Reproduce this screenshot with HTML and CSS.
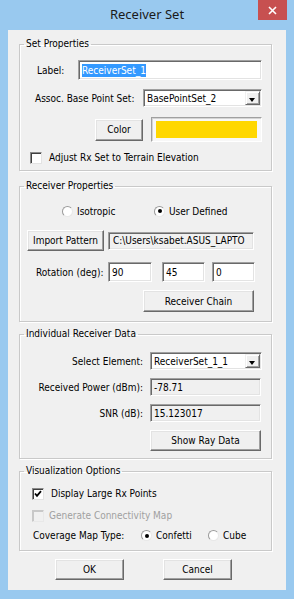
FILE: index.html
```html
<!DOCTYPE html>
<html lang="en">
<head>
  <meta charset="UTF-8" />
  <title>Receiver Set</title>
  <link rel="stylesheet" href="styles.css">
</head>
<body>
  <div class="titlebar">
    <span></span>
    <span class="title">Receiver Set</span>
    <span class="close">
      <svg width="9" height="9" viewBox="0 0 9 9"><path d="M1 1 L8 8 M8 1 L1 8" stroke="#fff" stroke-width="1.6" /></svg>
    </span>
  </div>

  <div class="client">
    <!-- Set Properties -->
    <fieldset class="group g-set">
      <legend>Set Properties</legend>
      <div class="row r-label">
        <span class="lbl w-label">Label:</span>
        <div class="edit w-184"><span class="hilite">ReceiverSet_1</span></div>
      </div>
      <div class="row r-base">
        <span class="lbl w-base">Assoc. Base Point Set:</span>
        <div class="edit combo w-119">BasePointSet_2<span class="drop"></span></div>
      </div>
      <div class="row r-color">
        <div class="btn w-48">Color</div>
        <div class="swatch"><div class="swatch-fill"></div></div>
      </div>
      <div class="row r-adjust">
        <span class="check"></span>
        <span class="opt-text">Adjust Rx Set to Terrain Elevation</span>
      </div>
    </fieldset>

    <!-- Receiver Properties -->
    <fieldset class="group g-rx">
      <legend>Receiver Properties</legend>
      <div class="row r-radios">
        <span class="option w-92"><span class="radio"></span>Isotropic</span>
        <span class="option"><span class="radio on"></span>User Defined</span>
      </div>
      <div class="row r-import">
        <div class="btn w-77">Import Pattern</div>
        <div class="edit ro w-146 clip">C:\Users\ksabet.ASUS_LAPTO</div>
      </div>
      <div class="row r-rot">
        <span class="lbl w-rot">Rotation (deg):</span>
        <div class="edit w-44 tall">90</div>
        <div class="edit w-43 tall m-10">45</div>
        <div class="edit w-43 tall m-7">0</div>
      </div>
      <div class="row r-chain">
        <div class="btn w-111 tall">Receiver Chain</div>
      </div>
    </fieldset>

    <!-- Individual Receiver Data -->
    <fieldset class="group g-data">
      <legend>Individual Receiver Data</legend>
      <div class="data-grid">
        <span class="lbl right">Select Element:</span>
        <div class="edit combo w-112">ReceiverSet_1_1<span class="drop"></span></div>
        <span class="lbl right">Received Power (dBm):</span>
        <div class="edit ro w-111">-78.71</div>
        <span class="lbl right">SNR (dB):</span>
        <div class="edit ro w-111">15.123017</div>
        <span></span>
        <div class="btn w-111">Show Ray Data</div>
      </div>
    </fieldset>

    <!-- Visualization Options -->
    <fieldset class="group g-vis">
      <legend>Visualization Options</legend>
      <div class="row r-large">
        <span class="check">
          <svg width="8" height="8" viewBox="0 0 8 8"><path d="M1 3.5 L3 5.8 L7 1.2" fill="none" stroke="#000" stroke-width="1.8" /></svg>
        </span>
        <span class="opt-text">Display Large Rx Points</span>
      </div>
      <div class="row r-conn disabled">
        <span class="check off"></span>
        <span class="opt-text">Generate Connectivity Map</span>
      </div>
      <div class="row r-cov">
        <span class="lbl w-cov">Coverage Map Type:</span>
        <span class="option w-67"><span class="radio on"></span>Confetti</span>
        <span class="option"><span class="radio"></span>Cube</span>
      </div>
    </fieldset>

    <div class="actions">
      <div class="btn w-69">OK</div>
      <div class="btn w-69">Cancel</div>
    </div>
  </div>
</body>
</html>
```

FILE: styles.css
```css
body {
  margin: 0;
  background-color: #99c9ef;
  font-family: "DejaVu Sans Condensed", "Liberation Sans", sans-serif;
  font-size: 10px;
  color: #000;
}

.titlebar {
  display: grid;
  grid-template-columns: 1fr auto 1fr;
  height: 30px;
}

.title {
  font-family: "Noto Sans", sans-serif;
  font-size: 13px;
  line-height: 18px;
  padding-top: 5px;
  color: #1a1a1a;
}

.close {
  justify-self: end;
  margin-right: 7px;
  width: 29px;
  height: 20px;
  background-color: #c75050;
  display: flex;
  align-items: center;
  justify-content: center;
}

.client {
  margin: 0 8px;
  height: 560px;
  background-color: #f0f0f0;
  padding: 7px 14px 0 11px;
  box-sizing: border-box;
}

/* group boxes */
.group {
  margin: 0;
  padding: 0;
  min-width: 0;
  border: 1px solid #c9c9c9;
  box-shadow: inset 1px 1px #fff, 1px 1px #fff;
}

.group legend {
  padding: 0 2px;
  margin-left: 4px;
  line-height: 14px;
  height: 14px;
}

.g-set { padding-bottom: 6px; }
.g-rx { margin-top: 8px; padding-bottom: 9px; }
.g-data { margin-top: 5px; padding-bottom: 7px; }
.g-vis { margin-top: 5px; padding-bottom: 8px; }

.row {
  display: flex;
  align-items: center;
}

.lbl { white-space: nowrap; }
.right { text-align: right; }

.r-label { margin-top: 9px; height: 20px; padding-left: 17px; }
.r-base { margin-top: 9px; height: 18px; padding-left: 15px; }
.r-color { margin-top: 10px; height: 25px; padding-left: 75px; gap: 8px; }
.r-adjust { margin-top: 9px; height: 13px; padding-left: 10px; gap: 7px; }

.r-radios { margin-top: 11px; height: 14px; padding-left: 42px; }
.r-import { margin-top: 12px; height: 21px; padding-left: 7px; gap: 4px; }
.r-rot { margin-top: 11px; height: 20px; padding-left: 16px; }
.r-chain { margin-top: 8px; height: 22px; padding-left: 123px; }

.r-large { margin-top: 9px; height: 13px; padding-left: 12px; gap: 7px; }
.r-conn { margin-top: 9px; height: 13px; padding-left: 12px; gap: 5px; }
.r-cov { margin-top: 7px; height: 13px; padding-left: 13px; }

.w-label { width: 41px; }
.w-base { width: 108px; }
.w-rot { width: 72px; }
.w-cov { width: 108px; }
.w-184 { width: 184px; }
.w-119 { width: 119px; }
.w-146 { width: 146px; }
.w-112 { width: 112px; }
.w-111 { width: 111px; }
.w-92 { width: 92px; }
.w-77 { width: 77px; }
.w-69 { width: 69px; }
.w-67 { width: 67px; }
.w-48 { width: 48px; }
.w-44 { width: 44px; }
.w-43 { width: 43px; }
.m-10 { margin-left: 10px; }
.m-7 { margin-left: 7px; }

/* sunken edit fields */
.edit {
  position: relative;
  box-sizing: border-box;
  height: 18px;
  padding-left: 3px;
  display: flex;
  align-items: center;
  background-color: #fff;
  border: 1px solid;
  border-color: #a0a0a0 #fff #fff #a0a0a0;
  box-shadow: inset 1px 1px #696969, inset -1px -1px #e3e3e3;
  white-space: nowrap;
}

.edit.tall { height: 20px; }
.edit.ro { background-color: #f0f0f0; }
.edit.clip { overflow: hidden; padding-left: 4px; }
.r-label .edit { height: 20px; }

.hilite {
  background-color: #3399ff;
  color: #fff;
  line-height: 13px;
}

/* combo box arrow button */
.drop {
  position: absolute;
  top: 1px;
  right: 1px;
  bottom: 1px;
  width: 15px;
  box-sizing: border-box;
  background-color: #f0f0f0;
  border: 1px solid;
  border-color: #f0f0f0 #696969 #696969 #f0f0f0;
  box-shadow: inset 1px 1px #fff, inset -1px -1px #a0a0a0;
}

.drop::after {
  content: "";
  position: absolute;
  left: 3px;
  top: 6px;
  border-left: 3.5px solid transparent;
  border-right: 3.5px solid transparent;
  border-top: 4px solid #000;
}

/* raised push buttons */
.btn {
  box-sizing: border-box;
  height: 21px;
  display: flex;
  align-items: center;
  justify-content: center;
  background-color: #f0f0f0;
  border: 1px solid;
  border-color: #fff #696969 #696969 #fff;
  box-shadow: inset -1px -1px #a0a0a0, inset 1px 1px #e3e3e3;
  white-space: nowrap;
}

.btn.tall { height: 22px; }
.r-color .btn { height: 22px; }

.swatch {
  box-sizing: border-box;
  width: 111px;
  height: 25px;
  padding: 3px 4px;
  background-color: #f7f7f7;
  border: 1px solid;
  border-color: #a0a0a0 #fff #fff #a0a0a0;
  box-shadow: inset 1px 1px #d4d4d4;
}

.swatch-fill {
  height: 100%;
  background-color: #ffd700;
}

/* check boxes and radio buttons */
.check {
  box-sizing: border-box;
  width: 12px;
  height: 12px;
  flex: none;
  display: flex;
  align-items: center;
  justify-content: center;
  background-color: #fff;
  border: 1px solid;
  border-color: #8a8a8a #e3e3e3 #e3e3e3 #8a8a8a;
  box-shadow: inset 1px 1px #404040;
}

.check.off {
  background-color: #f0f0f0;
  border-color: #c8c8c8 #e8e8e8 #e8e8e8 #c8c8c8;
  box-shadow: inset 1px 1px #c8c8c8;
}

.disabled { color: #a0a0a0; }

.option {
  display: inline-flex;
  align-items: center;
  gap: 4px;
}

.radio {
  box-sizing: border-box;
  width: 11px;
  height: 11px;
  border-radius: 50%;
  background-color: #fff;
  border: 1px solid;
  border-color: #9a9a9a #e8e8e8 #e8e8e8 #9a9a9a;
  display: flex;
  align-items: center;
  justify-content: center;
}

.radio.on::after {
  content: "";
  width: 4px;
  height: 4px;
  border-radius: 50%;
  background-color: #000;
}

/* data grid */
.data-grid {
  display: grid;
  grid-template-columns: 123px 112px;
  grid-template-rows: 18px 18px 18px 21px;
  column-gap: 7px;
  row-gap: 8px;
  margin-top: 11px;
  align-items: center;
}

.actions {
  display: flex;
  gap: 39px;
  margin-top: 8px;
  padding-left: 36px;
}
```
